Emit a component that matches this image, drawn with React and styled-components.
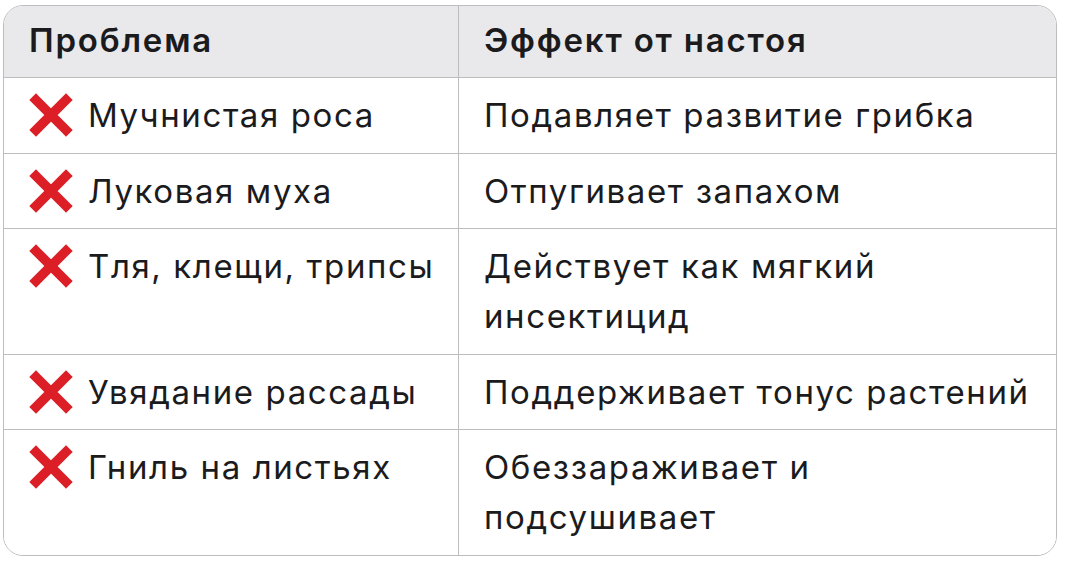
import React from "react";
import styled, { createGlobalStyle } from "styled-components";

const GlobalStyle = createGlobalStyle`
  html, body {
    margin: 0;
    background: #ffffff;
  }
  body {
    font-family: Inter, "Noto Sans", sans-serif;
    color: #1b1b1d;
  }
`;

const Page = styled.div`
  padding: 5px 12px 10px 3px;
`;

const Table = styled.div`
  display: grid;
  grid-template-columns: 454px 1fr;
  border: 1.5px solid #bdbdbf;
  border-radius: 20px;
  overflow: hidden;
`;

const Cell = styled.div`
  display: flex;
  align-items: flex-start;
  gap: 15px;
  padding: ${(p) => (p.$head ? "9px 22px 12px 25px" : "12px 22px 12.5px 25px")};
  font-size: 33px;
  line-height: 50px;
  letter-spacing: ${(p) => (p.$head ? "1.8px" : "1.6px")};
  font-weight: ${(p) => (p.$head ? 600 : 400)};
  background: ${(p) => (p.$head ? "#e9e9eb" : "#ffffff")};
  border-top: ${(p) => (p.$first ? "none" : "1px solid #bdbdbf")};
  border-left: ${(p) => (p.$right ? "1px solid #bdbdbf" : "none")};
`;

const Cross = styled.svg`
  flex: none;
  width: 44px;
  height: 44px;
  margin-top: 3px;
`;

const CrossIcon = () => (
  <Cross viewBox="0 0 44 44">
    <path
      d="M7 7 L37 37 M37 7 L7 37"
      stroke="#dc1f26"
      strokeWidth="9.5"
      strokeLinecap="square"
    />
  </Cross>
);

const rows = [
  ["Мучнистая роса", "Подавляет развитие грибка"],
  ["Луковая муха", "Отпугивает запахом"],
  ["Тля, клещи, трипсы", "Действует как мягкий инсектицид"],
  ["Увядание рассады", "Поддерживает тонус растений"],
  ["Гниль на листьях", "Обеззараживает и подсушивает"],
];

export default function App() {
  return (
    <>
      <GlobalStyle />
      <Page>
        <Table>
          <Cell $head $first>Проблема</Cell>
          <Cell $head $first $right>Эффект от настоя</Cell>
          {rows.map(([problem, effect]) => (
            <React.Fragment key={problem}>
              <Cell>
                <CrossIcon />
                <span>{problem}</span>
              </Cell>
              <Cell $right>{effect}</Cell>
            </React.Fragment>
          ))}
        </Table>
      </Page>
    </>
  );
}
